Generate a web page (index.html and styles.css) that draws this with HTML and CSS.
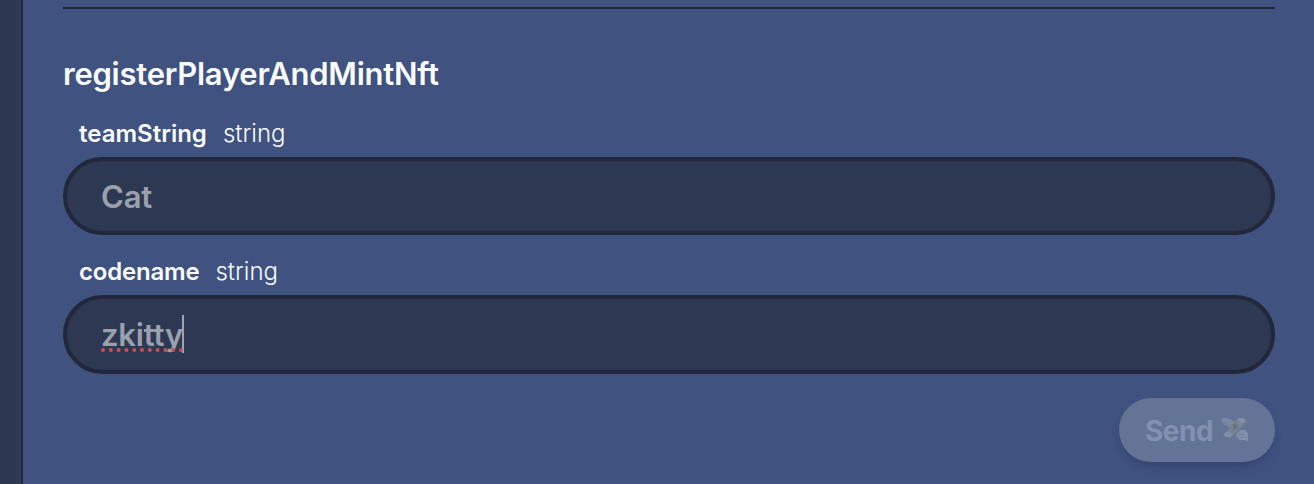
FILE: index.html
```html
<!DOCTYPE html>
<html lang="en">
<head>
<meta charset="utf-8">
<title>Contract</title>
<link rel="stylesheet" href="styles.css">
</head>
<body>
<div class="page">
  <main class="panel">
    <hr class="divider">
    <h2 class="title">registerPlayerAndMintNft</h2>
    <div class="label"><span class="name name-team">teamString</span><span class="type">string</span></div>
    <div class="field"><span class="value value-cat">Cat</span></div>
    <div class="label label-second"><span class="name name-code">codename</span><span class="type">string</span></div>
    <div class="field field-second"><span class="value value-kitty">zkitty<svg class="spelling" width="82" height="4" viewBox="0 0 82 4"><path d="M2 2H82" stroke="#c9514e" stroke-width="4" stroke-linecap="round" stroke-dasharray="0 7.8"/></svg></span><span class="caret"></span></div>
    <div class="actions">
      <button class="send" disabled><span class="send-text">Send</span>
        <svg class="money" width="30" height="28" viewBox="0 0 30 28">
          <path d="M1 3C5 1 9 2 12 4L15 7L11 12L8 11L7 10L4 9L4 7L2 6Z" fill="#7b88a3"/>
          <path d="M19 14L25 14L27 16L28 19L28 25L24 24L20 24L17 21L15 18Z" fill="#8390a9"/>
          <path d="M2 20L17 3L20 1L27 5L27 7L11 24L9 24Z" fill="#6a788c"/>
          <path d="M3 19L19 1L27 5L10 22Z" fill="#748299"/>
          <path d="M11 10L15 5L22 9L17 16Z" fill="#7d868f"/>
          <path d="M12.500 10L15 7L19.500 10L17 14Z" fill="#707e90"/>
          <ellipse cx="21.500" cy="4.500" rx="3.600" ry="2.400" fill="#8390a8"/>
          <ellipse cx="8" cy="18.500" rx="3.800" ry="2.500" fill="#8390a8"/>
          <path d="M17 8C14 7 12 10 14 11C17 11 17 13 13 13M14 8L16 13" fill="none" stroke="#5d6b82" stroke-width="1"/>
          <path d="M4 7L8 8M6 10L10 9M18 19L24 18M20 22L26 21" fill="none" stroke="#6d7b98" stroke-width=".7"/>
        </svg>
      </button>
    </div>
  </main>
</div>
</body>
</html>
```
FILE: styles.css
```css
* { box-sizing: border-box; }
body {
  margin: 0;
  font-family: Inter, "Liberation Sans", sans-serif;
  font-feature-settings: "calt" 0;
  color: #f9fbff;
  background: #3f5280;
}
.page {
  height: 484px;
  padding-left: 21px;
  overflow: hidden;
  background: linear-gradient(90deg, #2d3751 0, #2d3751 14px, #303b58 21px);
}
.panel {
  height: 484px;
  padding: 7px 39px 0 40px;
  border-left: 2px solid #22283a;
  background: #3f5280;
}
.divider { height: 2px; margin: 0; border: 0; background: #212638; }
.title {
  margin: 45px 0 0;
  font-size: 31px;
  line-height: 40px;
  font-weight: 600;
  letter-spacing: -0.25px;
}
.label {
  display: flex;
  height: 32px;
  margin-top: 24px;
  padding-left: 16px;
  gap: 16px;
  font-size: 24px;
  line-height: 32px;
}
.label-second { margin-top: 21px; }
.name { font-weight: 600; }
.name-code { letter-spacing: -0.2px; }
.type { font-weight: 350; }
.field {
  display: flex;
  align-items: center;
  height: 78px;
  margin-top: 7px;
  padding-left: 34px;
  border: 4px solid #22273a;
  border-radius: 40px;
  background: #2d3853;
  color: #9ba0ad;
  font-size: 31px;
  line-height: 40px;
  font-weight: 600;
}
.field-second { height: 79px; }
.value { position: relative; letter-spacing: -0.2px; }
.value-cat { padding-top: 2px; }
.spelling { position: absolute; left: 0; top: 33px; }
.caret { width: 2px; height: 38px; margin: -2px 0 0 -1px; background: #9da5b5; }
.actions { display: flex; justify-content: flex-end; margin-top: 24px; }
.send {
  display: flex;
  align-items: center;
  width: 156px;
  height: 64px;
  padding: 0 0 0 26px;
  border: 0;
  border-radius: 32px;
  background: #647497;
  box-shadow: 0 6px 10px -2px rgba(30, 38, 65, .3);
  color: #8290b2;
  font: 700 28px/40px Inter, "Liberation Sans", sans-serif;
  letter-spacing: -0.5px;
}
.send-text { padding-top: 1px; }
.money { margin-left: 7px; }
```
